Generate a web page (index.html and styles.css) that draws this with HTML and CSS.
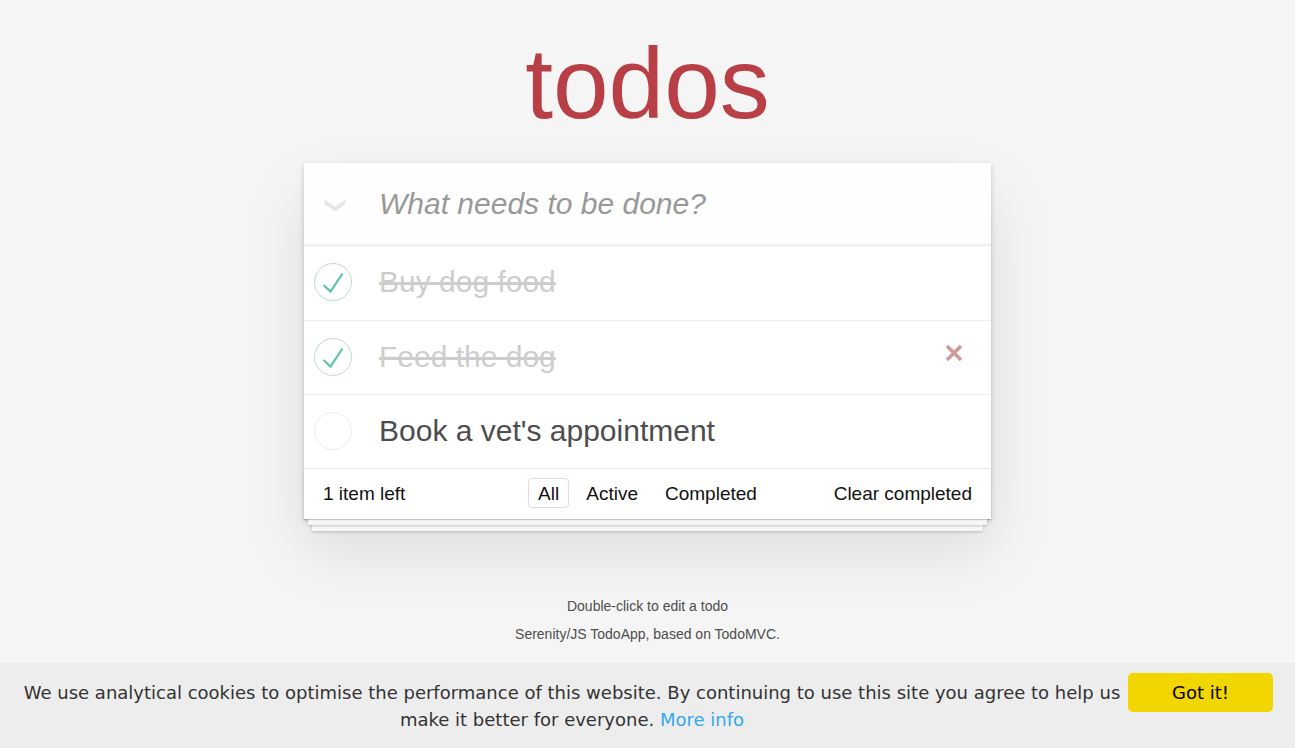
FILE: index.html
```html
<!DOCTYPE html>
<html lang="en">
<head>
<meta charset="utf-8">
<meta name="viewport" content="width=device-width, initial-scale=1">
<title>Serenity/JS TodoApp</title>
<link rel="stylesheet" href="styles.css">
</head>
<body>
<main class="page">
  <h1 class="title">todos</h1>
  <section class="todoapp">
    <header class="entry">
      <button class="toggle-all" type="button" aria-label="Mark all as complete">
        <svg width="22" height="14" viewBox="0 0 22 14" aria-hidden="true"><path d="M0.5 0.5L11 7.5L21.5 0.5V5L11 12.5L0.5 5Z" fill="#e6e6e6"/></svg>
      </button>
      <input class="new-todo" type="text" placeholder="What needs to be done?" aria-label="New todo">
    </header>
    <ul class="todo-list">
      <li class="todo completed">
        <span class="check">
          <input class="toggle" type="checkbox" id="todo-1" checked>
          <svg class="mark" viewBox="0 0 38 38" aria-hidden="true"><path d="M9.5 22L16.5 28.5L28.5 10.5" /></svg>
        </span>
        <label class="text" for="todo-1">Buy dog food</label>
      </li>
      <li class="todo completed">
        <span class="check">
          <input class="toggle" type="checkbox" id="todo-2" checked>
          <svg class="mark" viewBox="0 0 38 38" aria-hidden="true"><path d="M9.5 22L16.5 28.5L28.5 10.5" /></svg>
        </span>
        <label class="text" for="todo-2">Feed the dog</label>
        <button class="destroy" type="button" aria-label="Delete Feed the dog">
          <svg width="18" height="18" viewBox="0 0 18 18" aria-hidden="true"><path d="M2 2L16 16M16 2L2 16"/></svg>
        </button>
      </li>
      <li class="todo">
        <span class="check">
          <input class="toggle" type="checkbox" id="todo-3">
        </span>
        <label class="text" for="todo-3">Book a vet's appointment</label>
      </li>
    </ul>
    <footer class="footer">
      <span class="count">1 item left</span>
      <nav class="filters" aria-label="Filter todos">
        <a class="filter selected" href="#/">All</a>
        <a class="filter" href="#/active">Active</a>
        <a class="filter" href="#/completed">Completed</a>
      </nav>
      <button class="clear" type="button">Clear completed</button>
    </footer>
  </section>
  <footer class="info">
    <p>Double-click to edit a todo</p>
    <p><a href="#serenity">Serenity/JS TodoApp</a>, based on <a href="#todomvc">TodoMVC</a>.</p>
  </footer>
</main>
<aside class="cookies" aria-label="Cookie consent">
  <p class="message">We use analytical cookies to optimise the performance of this website. By continuing to use this site you agree to help us make it better for everyone. <a class="more" href="#more">More info</a></p>
  <button class="accept" type="button">Got it!</button>
</aside>
</body>
</html>
```
FILE: styles.css
```css
* {
  box-sizing: border-box;
}

body {
  margin: 0;
  min-height: 100vh;
  display: flex;
  flex-direction: column;
  background: #f5f5f5;
  color: #4d4d4d;
  font-family: "Liberation Sans", Arial, sans-serif;
}

button,
input {
  font: inherit;
  color: inherit;
  margin: 0;
  padding: 0;
  border: 0;
  background: none;
}

button {
  cursor: pointer;
}

.page {
  width: 100%;
  max-width: 687px;
  margin: 0 auto;
}

.title {
  margin: 0;
  padding: 26px 0 23px;
  font-size: 100px;
  font-weight: 400;
  line-height: 114px;
  text-align: center;
  color: #b83f45;
}

.todoapp {
  background: #fff;
  box-shadow: 0 2px 5px rgba(0, 0, 0, 0.2), 0 31px 62px rgba(0, 0, 0, 0.1);
}

.entry {
  display: flex;
  align-items: stretch;
  background: #fefefe;
  box-shadow: inset 0 -2px 1px rgba(0, 0, 0, 0.03);
}

.toggle-all {
  width: 61px;
  padding: 8px 0 0;
}

.new-todo {
  flex: 1;
  min-width: 0;
  height: 82px;
  padding: 0 14px;
  font-size: 30px;
  outline: 0;
}

.new-todo::placeholder {
  font-style: italic;
  color: #999;
  opacity: 1;
}

.todo-list {
  margin: 0;
  padding: 0;
  list-style: none;
  border-top: 1px solid #e6e6e6;
}

.todo {
  display: flex;
  align-items: center;
  min-height: 74px;
  padding-bottom: 2px;
  font-size: 30px;
}

.todo + .todo {
  border-top: 1px solid #ededed;
}

.check {
  display: grid;
  width: 38px;
  height: 38px;
  margin-left: 10px;
}

.toggle,
.mark {
  grid-area: 1 / 1;
  width: 38px;
  height: 38px;
}

.toggle {
  appearance: none;
  border: 1px solid #ededed;
  border-radius: 50%;
}

.toggle:checked {
  border-color: #bddad5;
}

.mark {
  fill: none;
  stroke: #5dc2af;
  stroke-width: 2.2;
  pointer-events: none;
}

.text {
  flex: 1;
  padding-left: 27px;
  line-height: 36px;
}

.completed .text {
  color: #cdcdcd;
  text-decoration: line-through;
}

.destroy {
  width: 50px;
  height: 50px;
  margin: 0 12px 10px 0;
  stroke: #cc9a9a;
  stroke-width: 3.6;
}

.footer {
  display: grid;
  grid-template-columns: 1fr auto 1fr;
  align-items: center;
  padding: 9px 19px 11px;
  border-top: 1px solid #e6e6e6;
  font-size: 19px;
  line-height: 22px;
  color: #111;
  box-shadow: 0 1px 1px rgba(0, 0, 0, 0.2), 0 10px 0 -4px #f6f6f6,
    0 11px 2px -4px rgba(0, 0, 0, 0.2), 0 20px 0 -8px #f6f6f6,
    0 21px 3px -8px rgba(0, 0, 0, 0.2);
}

.count,
.clear {
  padding-top: 2px;
}

.filters {
  display: flex;
  gap: 7px;
}

.filter {
  padding: 4px 9px 2px;
  border: 1px solid transparent;
  border-radius: 4px;
  color: inherit;
  text-decoration: none;
}

.selected {
  border-color: #efd5d6;
}

.clear {
  justify-self: end;
}

.info {
  padding-top: 78px;
  font-size: 14px;
  line-height: 18px;
  text-align: center;
}

.info p {
  margin: 0 0 10px;
}

.info a {
  color: inherit;
  text-decoration: none;
}

.cookies {
  display: flex;
  align-items: flex-start;
  gap: 6px;
  margin-top: auto;
  padding: 10px 22px 15px;
  background: #ededed;
  color: #333;
  font-family: "DejaVu Sans", Verdana, sans-serif;
  font-size: 18px;
  line-height: 27px;
}

.message {
  flex: 1;
  margin: 0;
  padding-top: 6px;
  text-align: center;
}

.more {
  color: #31a8f0;
  text-decoration: none;
}

.accept {
  width: 145px;
  padding: 6px 0;
  border-radius: 5px;
  background: #f1d600;
  color: #000;
}
```
